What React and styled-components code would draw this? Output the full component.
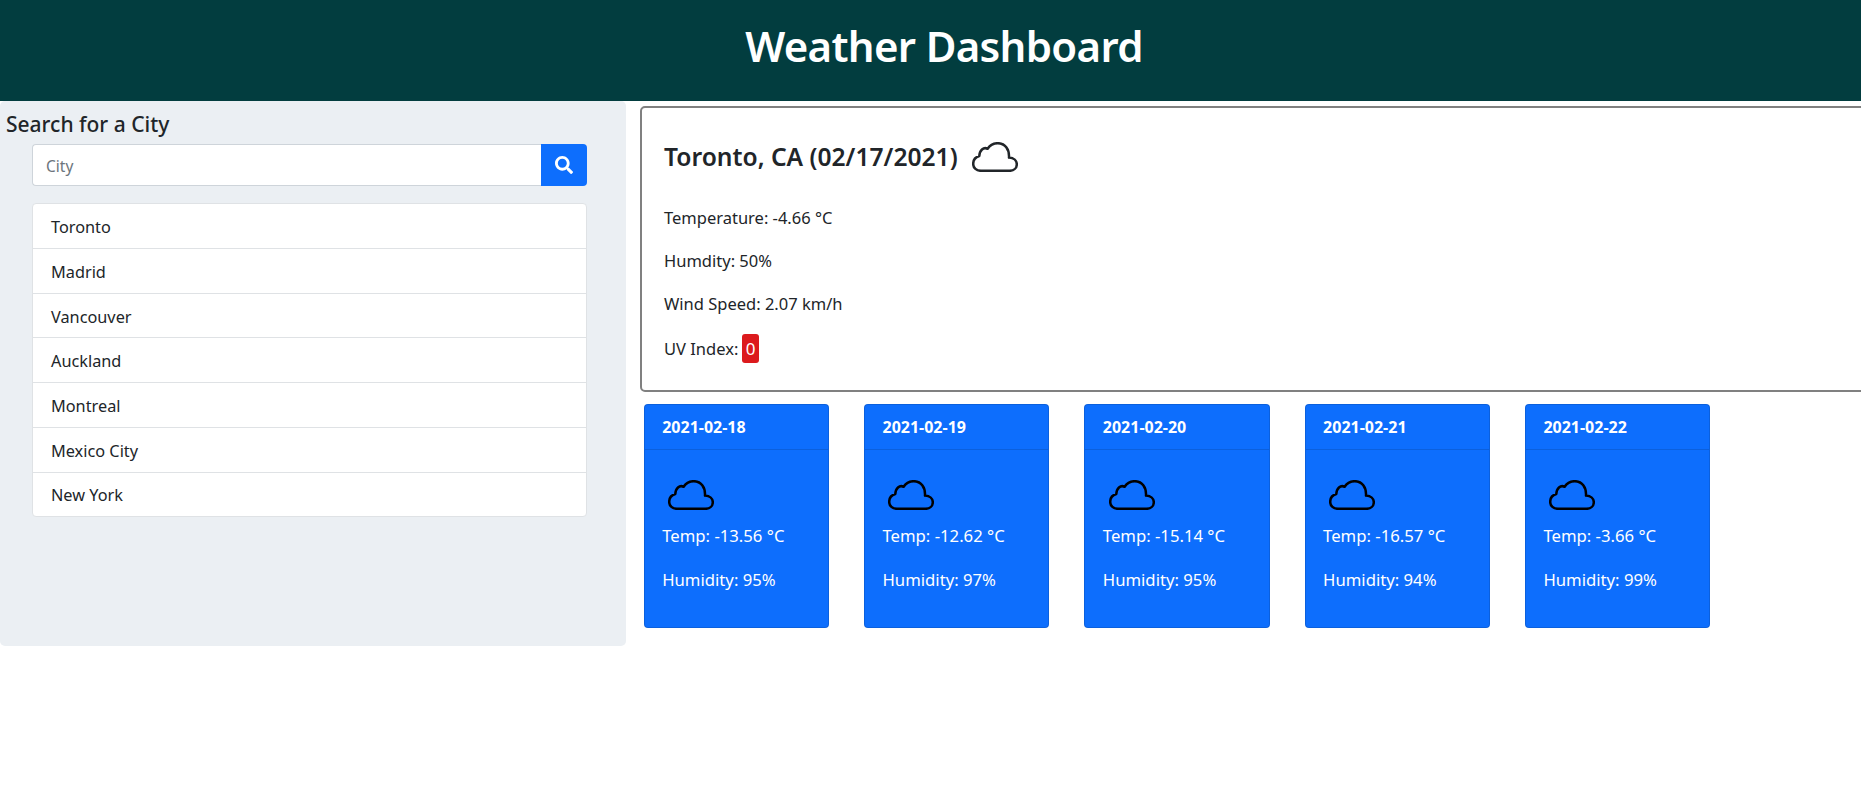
import styled, { createGlobalStyle } from 'styled-components';
import { FaSearch } from 'react-icons/fa';

const GlobalStyle = createGlobalStyle`
  html, body {
    margin: 0;
    overflow: hidden;
    background: #fff;
    color: #212529;
    font-family: "Noto Sans", "Open Sans", sans-serif;
    font-size: 16px;
    line-height: 1.5;
  }
  * { box-sizing: border-box; }
`;

const Header = styled.header`
  height: 101px;
  padding-left: 27px;
  background: #023d3f;
  color: #fff;
  display: flex;
  align-items: center;
  justify-content: center;
`;

const Title = styled.h1`
  margin: 0 0 10px;
  font-size: 42px;
  font-weight: 600;
  letter-spacing: -0.68px;
`;

const Main = styled.main`
  display: flex;
  align-items: flex-start;
`;

const Sidebar = styled.aside`
  flex: 0 0 626px;
  height: 545px;
  padding-top: 8px;
  background: #ebeff3;
  border-radius: 5px;
`;

const SidebarTitle = styled.h5`
  margin: 0 0 5px 6px;
  font-size: 21px;
  line-height: 30px;
  font-weight: 500;
`;

const SearchRow = styled.form`
  display: flex;
  height: 42px;
  margin: 0 39px 17px 32px;
`;

const CityInput = styled.input`
  flex: 1;
  min-width: 0;
  padding: 9px 13px 5px;
  border: 1px solid #ced4da;
  border-right: 0;
  border-radius: 4px 0 0 4px;
  font: inherit;
  font-size: 15.5px;
  color: #212529;
  outline: none;

  &::placeholder {
    color: #6c757d;
  }
`;

const SearchButton = styled.button`
  flex: 0 0 46px;
  display: flex;
  align-items: center;
  justify-content: center;
  padding: 0;
  border: 0;
  border-radius: 0 4px 4px 0;
  background: #0d6efd;
  color: #fff;
`;

const CityList = styled.ul`
  margin: 0 39px 0 32px;
  padding: 0;
  list-style: none;
  background: #fff;
  border: 1px solid #dfe2e5;
  border-radius: 4px;
`;

const CityItem = styled.li`
  height: 44.8px;
  padding: 11px 18px 0;
  font-size: 16.3px;
  border-bottom: 1px solid #dfe2e5;

  &:last-child {
    height: 43.5px;
    padding-top: 10px;
    border-bottom: 0;
  }
`;

const Content = styled.section`
  flex: 1;
  min-width: 0;
  padding: 5px 0 0 14px;
`;

const CurrentCard = styled.div`
  width: 1300px;
  height: 286px;
  padding: 28px 22px 0;
  border: 2px solid #808080;
  border-radius: 5px;
`;

const CityHeading = styled.h2`
  display: flex;
  align-items: center;
  gap: 14px;
  height: 42px;
  margin: 0 0 25.5px;
  font-size: 24.6px;
  font-weight: 600;
`;

const CloudSvg = styled.svg`
  display: block;
  flex: none;
  width: 46px;
  height: 30px;
  margin: ${(p) => p.$margin || '0'};
  fill: none;
  stroke: ${(p) => p.$color};
  stroke-width: 2.5;
  stroke-linejoin: round;
`;

const InfoLine = styled.p`
  margin: 0 0 16px;
  line-height: 27.4px;
  font-size: 16.5px;
`;

const UvBadge = styled.span`
  display: inline-block;
  height: 29px;
  margin-left: 4px;
  padding: 0 3.5px;
  background: #dc1a1d;
  border-radius: 3px;
  color: #fff;
  font-size: 17px;
  line-height: 29px;
`;

const ForecastRow = styled.div`
  display: flex;
  gap: 35px;
  margin: 12px 0 0 3.7px;
`;

const ForecastCard = styled.article`
  flex: 0 0 185.3px;
  height: 224px;
  background: #0d6efd;
  border: 1px solid rgba(0, 0, 0, 0.125);
  border-radius: 4px;
  color: #fff;
`;

const ForecastDate = styled.div`
  height: 45px;
  padding: 10px 17.5px 0;
  font-size: 16px;
  font-weight: 700;
  border-bottom: 1px solid rgba(0, 0, 0, 0.125);
`;

const ForecastBody = styled.div`
  padding: 30px 17.5px 0;
`;

const ForecastLine = styled.p`
  margin: 0 0 16px;
  font-size: 16.7px;
  line-height: 28px;
`;

function CloudIcon({ color = '#000', margin }) {
  return (
    <CloudSvg viewBox="0 0 46 30" $color={color} $margin={margin}>
      <path d="M9 28.8H37.5C41.8 28.8 44.8 26 44.8 22.3C44.8 18.6 41.8 15.8 37 15.6C37.5 7.5 33 1.2 25.8 1.2C21.4 1.2 18 3.2 15.6 6.8C11.5 4.6 7.5 8.5 7.3 14C3.5 15 1.2 18.3 1.2 22C1.2 26 4.5 28.8 9 28.8Z" />
    </CloudSvg>
  );
}

const cities = ['Toronto', 'Madrid', 'Vancouver', 'Auckland', 'Montreal', 'Mexico City', 'New York'];

const forecast = [
  { date: '2021-02-18', temp: '-13.56', humidity: 95 },
  { date: '2021-02-19', temp: '-12.62', humidity: 97 },
  { date: '2021-02-20', temp: '-15.14', humidity: 95 },
  { date: '2021-02-21', temp: '-16.57', humidity: 94 },
  { date: '2021-02-22', temp: '-3.66', humidity: 99 },
];

export default function App() {
  return (
    <>
      <GlobalStyle />
      <Header>
        <Title>Weather Dashboard</Title>
      </Header>
      <Main>
        <Sidebar>
          <SidebarTitle>Search for a City</SidebarTitle>
          <SearchRow>
            <CityInput type="text" placeholder="City" />
            <SearchButton type="button" aria-label="Search">
              <FaSearch size={18} />
            </SearchButton>
          </SearchRow>
          <CityList>
            {cities.map((city) => (
              <CityItem key={city}>{city}</CityItem>
            ))}
          </CityList>
        </Sidebar>
        <Content>
          <CurrentCard>
            <CityHeading>
              Toronto, CA (02/17/2021)
              <CloudIcon color="#212529" />
            </CityHeading>
            <InfoLine>Temperature: -4.66 °C</InfoLine>
            <InfoLine>Humdity: 50%</InfoLine>
            <InfoLine>Wind Speed: 2.07 km/h</InfoLine>
            <InfoLine>
              UV Index:<UvBadge>0</UvBadge>
            </InfoLine>
          </CurrentCard>
          <ForecastRow>
            {forecast.map((day) => (
              <ForecastCard key={day.date}>
                <ForecastDate>{day.date}</ForecastDate>
                <ForecastBody>
                  <CloudIcon margin="0 0 12px 6px" />
                  <ForecastLine>Temp: {day.temp} °C</ForecastLine>
                  <ForecastLine>Humidity: {day.humidity}%</ForecastLine>
                </ForecastBody>
              </ForecastCard>
            ))}
          </ForecastRow>
        </Content>
      </Main>
    </>
  );
}
